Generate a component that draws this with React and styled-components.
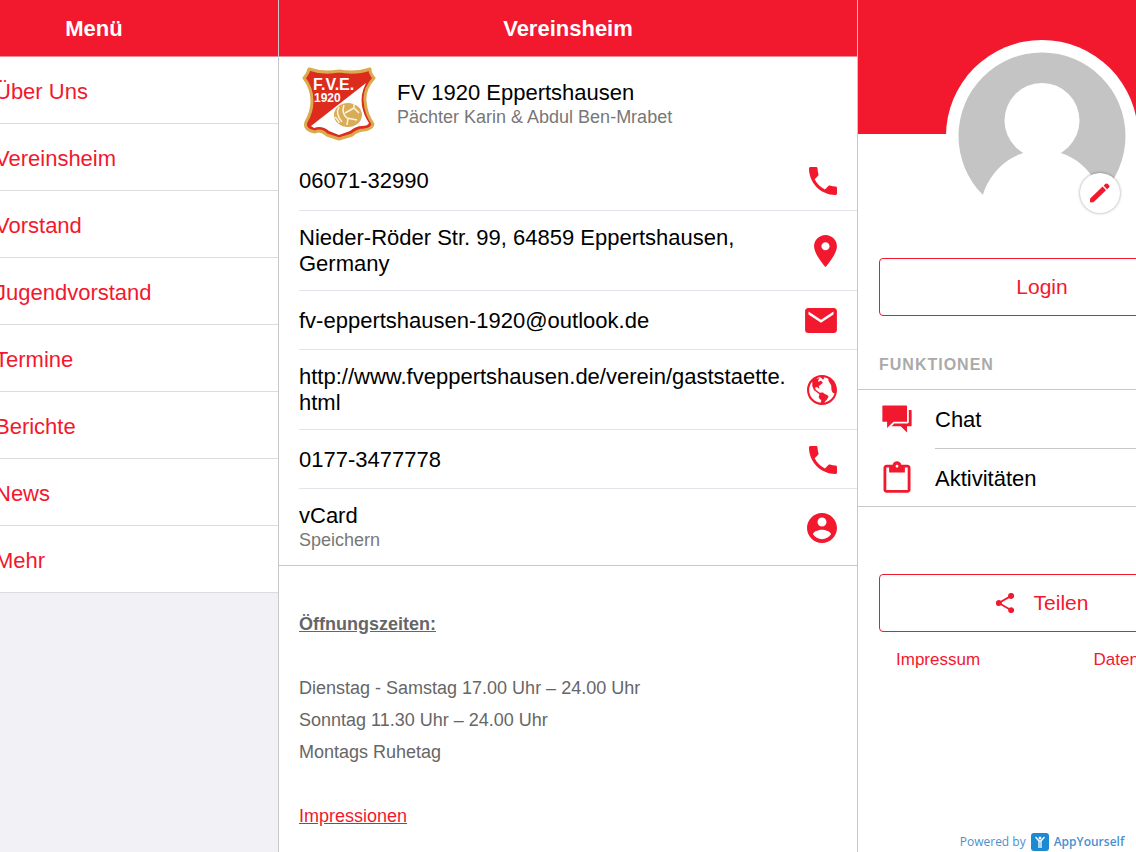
import styled, { createGlobalStyle } from 'styled-components'
import {
	IoMdCall,
	IoMdPin,
	IoMdMail,
	IoMdGlobe,
	IoMdContact,
	IoMdChatboxes,
	IoMdClipboard,
	IoMdShare
} from 'react-icons/io'

const red = '#f2182d'
const line = '#c8c7cc'

const GlobalStyle = createGlobalStyle`
* {
	box-sizing: border-box;
}
body {
	margin: 0;
	background: #fff;
	color: #000;
	font-family: "Liberation Sans", Arial, sans-serif;
	font-size: 22px;
	line-height: 26px;
}
a {
	color: inherit;
	text-decoration: none;
}
ul, h1, h2, p {
	margin: 0;
	padding: 0;
	list-style: none;
}
`

const Viewport = styled.div`
	overflow: hidden;
`

/* the side panels bleed over both window edges */
const Shell = styled.div`
	display: grid;
	grid-template-columns: 369px minmax(0, 1fr) 368px;
	min-height: 100vh;
	margin: 0 -90px;
`

const MenuPanel = styled.nav`
	background: #f2f2f6;
	border-right: 1px solid ${line};
`

const ContentPanel = styled.main`
	border-right: 1px solid ${line};
`

const SidePanel = styled.aside`
	display: flex;
	flex-direction: column;
`

const TitleBar = styled.header`
	height: 57px;
	display: flex;
	align-items: center;
	justify-content: center;
	padding-top: 2px;
	background: ${red};
	border-bottom: 1px solid #ee8a95;
	color: #fff;
	h1, h2 {
		font-size: 22px;
		font-weight: bold;
	}
`

const MenuLink = styled.a`
	display: flex;
	align-items: center;
	height: 67px;
	padding: 4px 20px 0 85px;
	background: #fff;
	border-bottom: 1px solid #dcdbe0;
	color: ${red};
`

const ClubHead = styled.div`
	display: flex;
	align-items: center;
	gap: 20px;
	height: 94px;
	padding-left: 23px;
`

const Sub = styled.p`
	color: #777;
	font-size: 18px;
	line-height: 23px;
`

const ContactList = styled.ul`
	border-bottom: 1px solid ${line};
	padding-left: 20px;
	li + li a {
		border-top: 1px solid #e4e3e9;
	}
`

const ContactRow = styled.a`
	display: flex;
	align-items: center;
	justify-content: space-between;
	gap: 10px;
	min-height: 59px;
	padding: 14px 20px 13px 0;
`

const ContactText = styled.div`
	min-width: 0;
	overflow-wrap: anywhere;
`

const IconBox = styled.span`
	flex: none;
	display: flex;
	width: ${(p) => p.$w}px;
	height: ${(p) => p.$h}px;
	color: ${red};
	svg {
		width: 100%;
		height: 100%;
	}
`

const Info = styled.section`
	padding: 42px 20px 20px;
	color: #666;
	font-size: 18px;
	line-height: 32px;
	h2 {
		margin-bottom: 32px;
		font-size: 18px;
		text-decoration: underline;
	}
	a {
		display: inline-block;
		margin-top: 32px;
		color: ${red};
		text-decoration: underline;
	}
`

const Cover = styled.div`
	display: flex;
	justify-content: center;
	height: 134px;
	margin-bottom: 124px;
	padding-top: 40px;
	background: ${red};
`

const Avatar = styled.div`
	position: relative;
	flex: none;
	width: 192px;
	height: 192px;
	border-radius: 50%;
	background: #fff;
`

const EditButton = styled.button`
	position: absolute;
	right: 18px;
	bottom: 19px;
	display: flex;
	align-items: center;
	justify-content: center;
	width: 40px;
	height: 40px;
	padding: 0;
	border: 0;
	border-radius: 50%;
	background: #fff;
	box-shadow: 0 0 3px rgba(0, 0, 0, 0.4);
	color: ${red};
`

const OutlineButton = styled.button`
	display: flex;
	align-items: center;
	justify-content: center;
	gap: 20px;
	height: 58px;
	margin: 0 21px;
	background: #fff;
	border: 1px solid ${red};
	border-radius: 4px;
	color: ${red};
	font-family: inherit;
	font-size: 21px;
`

const SectionLabel = styled.h2`
	margin: 36px 21px 11px;
	color: #aaa;
	font-size: 16px;
	letter-spacing: 1px;
`

const FunctionList = styled.ul`
	margin-bottom: 67px;
	padding-left: 21px;
	border: solid ${line};
	border-width: 1px 0;
	li + li span {
		border-top: 1px solid ${line};
	}
`

const FunctionLink = styled.a`
	display: flex;
	align-items: center;
	height: 58px;
	svg {
		color: ${red};
	}
`

const FunctionIcon = styled.div`
	display: flex;
	justify-content: center;
	width: 36px;
	margin-right: 20px;
`

const FunctionName = styled.span`
	flex: 1;
	display: flex;
	align-items: center;
	align-self: stretch;
	padding-top: 2px;
`

const Legal = styled.div`
	display: flex;
	justify-content: space-between;
	padding: 15px 38px;
	color: ${red};
	font-size: 17px;
`

const Powered = styled.a`
	display: flex;
	align-items: center;
	justify-content: center;
	gap: 5px;
	margin-top: auto;
	color: #4a90cf;
	font-family: "Open Sans", sans-serif;
	font-size: 12px;
	line-height: 20px;
	b {
		font-weight: 600;
	}
`

const Crest = () => (
	<svg width="75" height="76" viewBox="0 0 75 76" role="img" aria-label="FVE 1920">
		<path
			d="M7 3Q21 8 37 5Q54 8 68 3Q68 8 72 12Q62 23 63 35Q64 48 71 58Q70 63 62 64Q56 64 50 69L37 73L25 69Q19 63 13 66Q6 65 4 61Q3 59 4 56Q10 46 10 35Q10 22 2 12Q6 8 7 3Z"
			fill="#dd2b1d"
			stroke="#dba94e"
			strokeWidth="3"
			strokeLinejoin="round"
		/>
		<path
			d="M64 17Q58 29 60 40Q62 50 67 57Q66 60 60 60Q54 60 48 65L37 69L27 65Q20 59 12 62L9 60Z"
			fill="#fff"
		/>
		<ellipse cx="46" cy="49" rx="14" ry="12" fill="#d9ad58" />
		<path
			d="M37 41Q33 48 40 56M42 39Q39 47 45 52L55 54M43 47L52 42M52 42L57 47M46 52L45 59M52 42V38M33 51Q37 55 37 57"
			fill="none"
			stroke="#fff4dc"
			strokeWidth="1.5"
		/>
		<text x="11" y="24" fill="#fff" fontFamily="Liberation Sans" fontSize="16" fontWeight="bold">F.V.E.</text>
		<text x="12" y="36" fill="#fff" fontFamily="Liberation Sans" fontSize="12" fontWeight="bold">1920</text>
	</svg>
)

const Person = () => (
	<svg width="192" height="192" viewBox="0 0 192 192" aria-hidden="true">
		<circle cx="96" cy="96" r="83.5" fill="#c4c4c5" />
		<circle cx="96" cy="80.5" r="37.5" fill="#fff" />
		<ellipse cx="96" cy="174" rx="62" ry="64" fill="#fff" />
	</svg>
)

const Pencil = () => (
	<svg width="20" height="20" viewBox="0 0 20 20" fill="currentColor" aria-hidden="true">
		<path d="M.4 15.2L12.6 3.6L16 7.2L4 18.8Q3 19.6 1 19.6Q0 19.4 0 18.4Q0 16 .4 15.2Z" />
		<path d="M13.6 2.6L15.6.8Q16.6 0 17.6.8L19.2 2.4Q20 3.4 19 4.4L17 6.2Z" />
	</svg>
)

const AppLogo = () => (
	<svg width="18" height="18" viewBox="0 0 18 18" aria-hidden="true">
		<rect width="18" height="18" rx="3" fill="#1c8ad2" />
		<circle cx="9" cy="5" r="1.5" fill="#fff" />
		<path d="M4.5 4L8 8H10L13.5 4M8 8V15M10 8V15" fill="none" stroke="#fff" strokeWidth="1.3" />
	</svg>
)

const menu = [ 'Über Uns', 'Vereinsheim', 'Vorstand', 'Jugendvorstand', 'Termine', 'Berichte', 'News', 'Mehr' ]

const contacts = [
	{ text: '06071-32990', href: 'tel:06071-32990', Icon: IoMdCall, box: '64 64 384 384', w: 28, h: 28 },
	{ text: 'Nieder-Röder Str. 99, 64859 Eppertshausen, Germany', href: '#karte', Icon: IoMdPin, box: '96 32 320 448', w: 23, h: 32 },
	{ text: 'fv-eppertshausen-1920@outlook.de', href: 'mailto:fv-eppertshausen-1920@outlook.de', Icon: IoMdMail, box: '32 80 448 352', w: 32, h: 25 },
	{ text: 'http://www.fveppertshausen.de/verein/gaststaette.html', href: 'http://www.fveppertshausen.de/verein/gaststaette.html', Icon: IoMdGlobe, box: '48 48 416 416', w: 30, h: 30 },
	{ text: '0177-3477778', href: 'tel:0177-3477778', Icon: IoMdCall, box: '64 64 384 384', w: 28, h: 28 },
	{ text: 'vCard', sub: 'Speichern', href: '#vcard', Icon: IoMdContact, box: '48 48 416 416', w: 30, h: 30 }
]

const App = () => (
	<Viewport>
		<GlobalStyle />
		<Shell>
			<MenuPanel>
				<TitleBar>
					<h2>Menü</h2>
				</TitleBar>
				<ul>
					{menu.map((name) => (
						<li key={name}>
							<MenuLink href="#">{name}</MenuLink>
						</li>
					))}
				</ul>
			</MenuPanel>
			<ContentPanel>
				<TitleBar>
					<h1>Vereinsheim</h1>
				</TitleBar>
				<ClubHead>
					<Crest />
					<div>
						<p>FV 1920 Eppertshausen</p>
						<Sub>Pächter Karin &amp; Abdul Ben-Mrabet</Sub>
					</div>
				</ClubHead>
				<ContactList>
					{contacts.map(({ text, sub, href, Icon, box, w, h }) => (
						<li key={text}>
							<ContactRow href={href}>
								<ContactText>
									<p>{text}</p>
									{sub && <Sub>{sub}</Sub>}
								</ContactText>
								<IconBox $w={w} $h={h}>
									<Icon viewBox={box} />
								</IconBox>
							</ContactRow>
						</li>
					))}
				</ContactList>
				<Info>
					<h2>Öffnungszeiten:</h2>
					<p>Dienstag - Samstag 17.00 Uhr – 24.00 Uhr</p>
					<p>Sonntag 11.30 Uhr – 24.00 Uhr</p>
					<p>Montags Ruhetag</p>
					<a href="#impressionen">Impressionen</a>
				</Info>
			</ContentPanel>
			<SidePanel>
				<Cover>
					<Avatar>
						<Person />
						<EditButton aria-label="Profil bearbeiten">
							<Pencil />
						</EditButton>
					</Avatar>
				</Cover>
				<OutlineButton>Login</OutlineButton>
				<SectionLabel>FUNKTIONEN</SectionLabel>
				<FunctionList>
					<li>
						<FunctionLink href="#chat">
							<FunctionIcon>
								<IoMdChatboxes size={36} />
							</FunctionIcon>
							<FunctionName>Chat</FunctionName>
						</FunctionLink>
					</li>
					<li>
						<FunctionLink href="#aktivitaeten">
							<FunctionIcon>
								<IoMdClipboard size={36} />
							</FunctionIcon>
							<FunctionName>Aktivitäten</FunctionName>
						</FunctionLink>
					</li>
				</FunctionList>
				<OutlineButton>
					<IconBox $w={18} $h={20}>
						<IoMdShare viewBox="72 48 368 416" />
					</IconBox>
					Teilen
				</OutlineButton>
				<Legal>
					<a href="#impressum">Impressum</a>
					<a href="#datenschutz">Datenschutz</a>
				</Legal>
				<Powered href="#appyourself">
					<span>Powered by</span>
					<AppLogo />
					<b>AppYourself</b>
				</Powered>
			</SidePanel>
		</Shell>
	</Viewport>
)

export default App
